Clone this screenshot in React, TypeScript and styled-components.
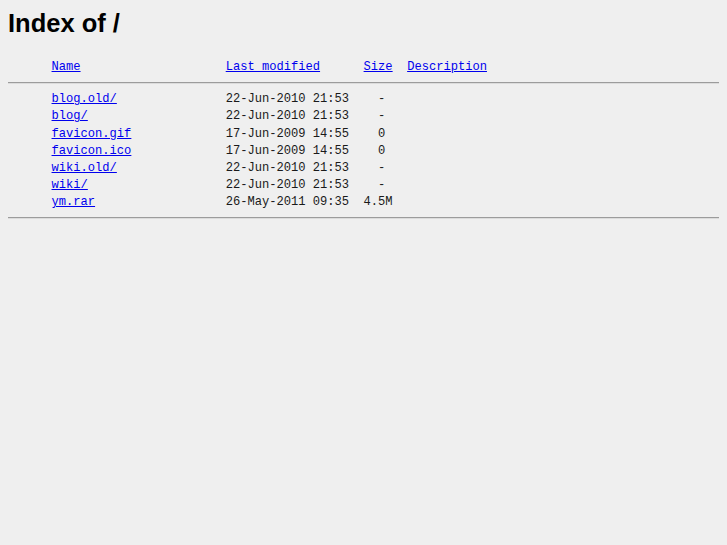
import React from "react";
import styled, { createGlobalStyle } from "styled-components";

const GlobalStyle = createGlobalStyle`
  html, body {
    margin: 0;
    padding: 0;
    background: #efefef;
  }
  body {
    padding: 8px;
  }
`;

const Title = styled.h1`
  margin: 1px 0 0;
  font-family: "Liberation Sans", Arial, sans-serif;
  font-weight: bold;
  font-size: 25.5px;
  line-height: 29px;
  color: #000;
`;

const Listing = styled.div`
  margin-top: 21px;
  font-family: "Liberation Mono", "Courier New", monospace;
  font-size: 12.1px;
  color: #1a1a1a;
`;

const Row = styled.div`
  display: flex;
  white-space: pre;
  line-height: 17.2px;
  height: 17.2px;
`;

const Cell = styled.span<{ $w?: number; $indent?: number }>`
  flex: none;
  width: ${(p) => (p.$w ? `${p.$w}ch` : "auto")};
  padding-left: ${(p) => (p.$indent ? `${p.$indent}ch` : "0")};
  box-sizing: content-box;
`;

const Link = styled.a`
  color: #0000ee;
  text-decoration: underline;
`;

const Rule = styled.hr<{ $top: number; $bottom: number }>`
  margin: ${(p) => `${p.$top}px 0 ${p.$bottom}px`};
  border: 0;
  border-top: 1px solid #9c9c9c;
  border-bottom: 1px solid #dcdcdc;
  height: 0;
`;

const files = [
  { name: "blog.old/", date: "22-Jun-2010 21:53", size: "  - " },
  { name: "blog/", date: "22-Jun-2010 21:53", size: "  - " },
  { name: "favicon.gif", date: "17-Jun-2009 14:55", size: "  0 " },
  { name: "favicon.ico", date: "17-Jun-2009 14:55", size: "  0 " },
  { name: "wiki.old/", date: "22-Jun-2010 21:53", size: "  - " },
  { name: "wiki/", date: "22-Jun-2010 21:53", size: "  - " },
  { name: "ym.rar", date: "26-May-2011 09:35", size: "4.5M" },
];

export default function App() {
  return (
    <>
      <GlobalStyle />
      <Title>Index of /</Title>
      <Listing>
        <Row>
          <Cell $indent={6} $w={24}>
            <Link href="#">Name</Link>
          </Cell>
          <Cell $w={19}>
            <Link href="#">Last modified</Link>
          </Cell>
          <Cell $w={6}>
            <Link href="#">Size</Link>
          </Cell>
          <Cell>
            <Link href="#">Description</Link>
          </Cell>
        </Row>
        <Rule $top={6} $bottom={7} />
        {files.map((f) => (
          <Row key={f.name}>
            <Cell $indent={6} $w={24}>
              <Link href="#">{f.name}</Link>
            </Cell>
            <Cell $w={19}>{f.date}</Cell>
            <Cell $w={6}>{f.size}</Cell>
          </Row>
        ))}
        <Rule $top={5} $bottom={6} />
      </Listing>
    </>
  );
}
